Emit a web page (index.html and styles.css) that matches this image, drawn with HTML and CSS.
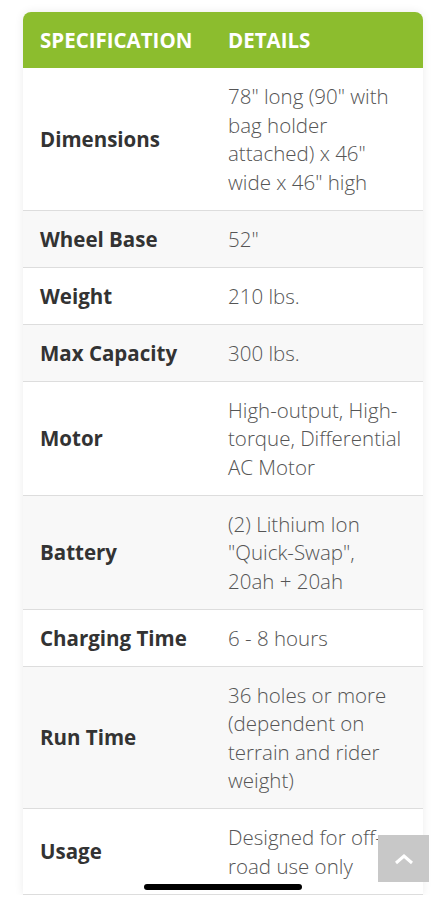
FILE: index.html
```html
<!DOCTYPE html>
<html lang="en">
<head>
  <meta charset="UTF-8">
  <title>Specifications</title>
  <link rel="stylesheet" href="styles.css">
</head>
<body>

<div class="specs">
  <table class="spec-table">
    <thead>
      <tr>
        <th class="col-spec">Specification</th>
        <th>Details</th>
      </tr>
    </thead>
    <tbody>
      <tr>
        <td class="label">Dimensions</td>
        <td>78" long (90" with bag holder attached) x 46" wide x 46" high</td>
      </tr>
      <tr>
        <td class="label">Wheel Base</td>
        <td>52"</td>
      </tr>
      <tr>
        <td class="label">Weight</td>
        <td>210 lbs.</td>
      </tr>
      <tr>
        <td class="label">Max Capacity</td>
        <td>300 lbs.</td>
      </tr>
      <tr>
        <td class="label">Motor</td>
        <td>High-output, High-torque, Differential AC Motor</td>
      </tr>
      <tr>
        <td class="label">Battery</td>
        <td>(2) Lithium Ion "Quick-Swap", 20ah + 20ah</td>
      </tr>
      <tr>
        <td class="label">Charging Time</td>
        <td>6 - 8 hours</td>
      </tr>
      <tr>
        <td class="label">Run Time</td>
        <td>36 holes or more (dependent on terrain and rider weight)</td>
      </tr>
      <tr>
        <td class="label">Usage</td>
        <td>Designed for off-road use only</td>
      </tr>
    </tbody>
  </table>
</div>

<!-- back to top -->
<a class="to-top" href="#">
  <svg width="20" height="12" viewBox="0 0 20 12"><path d="M2 10 L10 3 L18 10" fill="none" stroke="#fff" stroke-width="3"/></svg>
</a>

<div class="home-bar"></div>

</body>
</html>
```

FILE: styles.css
```css
body {
  margin: 0;
  background: #fff;
  font-family: "Open Sans", sans-serif;
  color: #333;
}
.specs {
  padding: 12px 23px 0;
}
.spec-table {
  width: 400px;
  border-collapse: collapse;
  border-radius: 8px 8px 0 0;
  overflow: hidden;
  box-shadow: 0 0 10px rgba(0,0,0,0.08);
  font-size: 20.5px;
  line-height: 28.5px;
}
.spec-table th {
  background: #8cbd2e;
  color: #fff;
  font-weight: 700;
  text-transform: uppercase;
  text-align: left;
  padding: 14px 17px 13.5px;
}
.spec-table .col-spec {
  width: 154px;
}
.spec-table td {
  padding: 14px 17px 13.5px;
  border-bottom: 1px solid #ddd;
  font-weight: 300;
  color: #555;
  vertical-align: middle;
}
.spec-table td.label {
  font-weight: 700;
  color: #333;
}
.spec-table tbody tr:nth-child(even) td {
  background: #f8f8f8;
}
.to-top {
  position: fixed;
  left: 378px;
  top: 835px;
  width: 51px;
  height: 47px;
  background: #c8c8c8;
  display: flex;
  align-items: center;
  justify-content: center;
}
.home-bar {
  position: fixed;
  left: 144px;
  top: 884px;
  width: 158px;
  height: 6px;
  border-radius: 3px;
  background: #000;
}
```
